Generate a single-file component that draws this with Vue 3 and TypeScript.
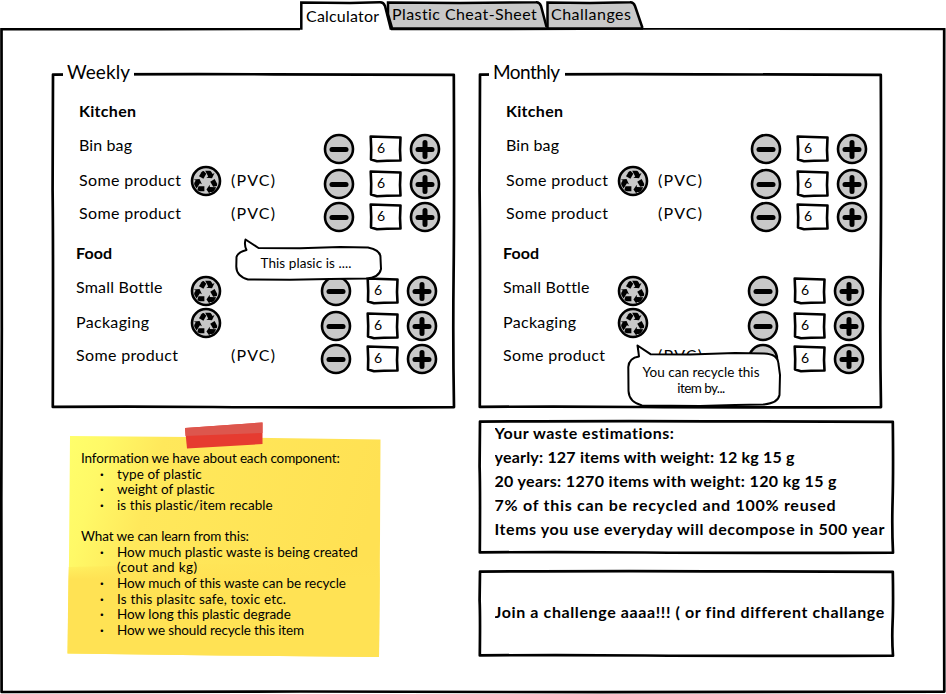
<script setup lang="ts">
import type { Directive } from 'vue'

interface Row { name: string; width: number; recycle?: boolean; pvc?: boolean; qty: number }
interface Group { title: string; width: number; rows: Row[]; kind: string }
interface Line { text: string; width: number; kind?: 'item' | 'cont' | 'gap' }

/* Spreads the letters of a line so that it takes the given width. */
const vFit: Directive<HTMLElement, number> = {
  mounted(el, { value }) {
    const count = (el.textContent ?? '').trim().length
    const natural = el.getBoundingClientRect().width
    if (count > 1) el.style.letterSpacing = `${(value - natural) / (count - 1)}px`
  },
}

const groups: Group[] = [
  {
    title: 'Kitchen', width: 57, kind: 'kitchen',
    rows: [
      { name: 'Bin bag', width: 53, qty: 6 },
      { name: 'Some product', width: 102, recycle: true, pvc: true, qty: 6 },
      { name: 'Some product', width: 102, pvc: true, qty: 6 },
    ],
  },
  {
    title: 'Food', width: 36, kind: 'food',
    rows: [
      { name: 'Small Bottle', width: 86, recycle: true, qty: 6 },
      { name: 'Packaging', width: 73, recycle: true, qty: 6 },
      { name: 'Some product', width: 102, pvc: true, qty: 6 },
    ],
  },
]

const panels = [
  { title: 'Weekly', width: 63, kind: 'weekly' },
  { title: 'Monthly', width: 67, kind: 'monthly' },
]

const notes: Line[] = [
  { text: 'Information we have about each component:', width: 259 },
  { text: 'type of plastic', width: 85, kind: 'item' },
  { text: 'weight of plastic', width: 98, kind: 'item' },
  { text: 'is this plastic/item recable', width: 156, kind: 'item' },
  { text: '', width: 0, kind: 'gap' },
  { text: 'What we can learn from this:', width: 168 },
  { text: 'How much plastic waste is being created', width: 241, kind: 'item' },
  { text: '(cout and kg)', width: 80, kind: 'cont' },
  { text: 'How much of this waste can be recycle', width: 229, kind: 'item' },
  { text: 'Is this plasitc safe, toxic etc.', width: 169, kind: 'item' },
  { text: 'How long this plastic degrade', width: 174, kind: 'item' },
  { text: 'How we should recycle this item', width: 187, kind: 'item' },
]

const estimates: Line[] = [
  { text: 'Your waste estimations:', width: 180 },
  { text: 'yearly: 127 items with weight: 12 kg 15 g', width: 300 },
  { text: '20 years: 1270 items with weight: 120 kg 15 g', width: 342 },
  { text: '7% of this can be recycled and 100% reused', width: 341 },
  { text: 'Items you use everyday will decompose in 500 year', width: 390 },
]

/* A closed, slightly uneven rectangle drawn inside a w × h box. */
const frame = (w: number, h: number): string =>
  `M2 2.6 Q${w * 0.3} 1.9 ${w * 0.55} 2.3 T${w - 2.2} 2.8 Q${w - 1.6} ${h * 0.4} ${w - 2.4} ${h * 0.6} T${w - 2} ${h - 2.4} Q${w * 0.6} ${h - 1.8} ${w * 0.4} ${h - 2.5} T1.8 ${h - 2.6} Q2.3 ${h * 0.5} 1.6 ${h * 0.35} Z`
</script>

<template>
  <div class="page">
    <nav class="tabs">
      <svg class="tabs-art" width="350" height="32" viewBox="0 0 350 32">
        <path class="tab-off" d="M247.500 28V2.600L290 3L330 2.300Q333.500 2 335 6L342.500 28" />
        <path class="tab-off" d="M92 28L88 14V2.600L160 3L236 2.300Q239.500 2 241 6L246.500 27" />
        <path class="tab-on" d="M1.300 29.700V2.500L50 3L80 2.300Q83.500 2.200 85 6L91 29.700" />
        <path class="tab-base" d="M91 28.500H343" />
      </svg>
      <span class="tab first"><span v-fit="73">Calculator</span></span>
      <span class="tab second"><span v-fit="145">Plastic Cheat-Sheet</span></span>
      <span class="tab third"><span v-fit="80">Challanges</span></span>
    </nav>

    <main class="board">
      <svg class="frame" width="946" height="666" viewBox="0 0 946 666">
        <path d="M300 .8L160 1.200L1.500 .8L1.800 300L1.300 470L1.600 664L300 663.500L600 664.200L944.300 663.600L943.600 330L944.200 .8L660 .5L391 1" />
      </svg>

      <section v-for="p in panels" :key="p.title" class="panel" :class="p.kind">
        <svg class="frame" width="406" height="338" viewBox="0 0 406 338"><path :d="frame(405, 337.500)" /></svg>
        <h2 class="legend"><span v-fit="p.width">{{ p.title }}</span></h2>
        <div v-for="g in groups" :key="g.title" class="group" :class="g.kind">
          <h3><span v-fit="g.width">{{ g.title }}</span></h3>
          <div v-for="(r, i) in g.rows" :key="i" class="row">
            <span class="name"><span v-fit="r.width">{{ r.name }}</span></span>
            <span class="badge">
              <svg v-if="r.recycle" width="32" height="32" viewBox="-16 -16 32 32">
                <circle class="disc" r="14" />
                <g v-for="a in [0, 120, 240]" :key="a" :transform="`translate(0 1.200) rotate(${a})`">
                  <path d="M-7 -5.900L-4.600 -9.900Q-3.800 -11.200 -2.200 -11.200L.3 -8.500L-2.600 -3.400Z" />
                  <path d="M-.8 -11.400H3.400Q4.700 -11.300 5.400 -10.200L6.600 -8.100L8.500 -9.100L6 -4L.3 -4.500L2.200 -5.700Z" />
                </g>
              </svg>
            </span>
            <span class="pvc"><span v-if="r.pvc" v-fit="44">(PVC)</span></span>
            <svg width="32" height="32" viewBox="-16 -16 32 32">
              <circle class="disc" r="14" /><path class="sign" d="M-7 0.500H7" />
            </svg>
            <span class="qty">
              <svg width="33" height="28" viewBox="0 0 33 28">
                <path d="M1.700 1.500L16 2L31.500 2.500L31 15L31.500 25.500L18 25.700L8 26.200L2 24.500L2.200 14Z" />
              </svg>
              <span>{{ r.qty }}</span>
            </span>
            <svg width="32" height="32" viewBox="-16 -16 32 32">
              <circle class="disc" r="14" /><path class="sign" d="M-7 0.500H7M0 -6.500V7.500" />
            </svg>
          </div>
        </div>

        <div v-if="p.kind === 'weekly'" class="bubble plasic">
          <svg width="150" height="46" viewBox="234 236 150 46">
            <path d="M246.500 250Q244 245 245.500 239.500L258.500 248L300 248.200L340 247L368 247.500Q381 250 380.500 258L381 269Q379 278 366 278.500L330 279L290 279.800L248 279.500Q236 276 236.300 266L236.500 257Q238 252 246.500 250Z" />
          </svg>
          <p><span v-fit="91">This plasic is ....</span></p>
        </div>
        <div v-else class="bubble recycle">
          <svg width="156" height="66" viewBox="626 342 156 66">
            <path d="M639 356.500Q638.500 352 637.500 345.500L650.500 354.200L690 354.500L735 353L764 353.500Q778 354 778.500 364L780 375L779.500 395Q778 403 764 404.500L735 405L700 406L642 405.500Q629 402 628.500 391L628.300 367Q629 358 639 356.500Z" />
          </svg>
          <p><span v-fit="117">You can recycle this</span><br><span v-fit="48">item by...</span></p>
        </div>
      </section>

      <section class="note">
        <svg width="320" height="240" viewBox="65 420 320 240">
          <defs>
            <linearGradient id="paper" x1="0" y1="0" x2="1" y2=".2">
              <stop offset="0" stop-color="#ffff6b" />
              <stop offset=".12" stop-color="#fff967" />
              <stop offset=".3" stop-color="#ffe85b" />
              <stop offset="1" stop-color="#ffe153" />
            </linearGradient>
            <linearGradient id="fold" x1="0" y1="0" x2="0" y2="1">
              <stop offset="0" stop-color="#ffe254" stop-opacity="0" />
              <stop offset=".2" stop-color="#ffe254" />
            </linearGradient>
          </defs>
          <path fill="url(#paper)" d="M70 436L190 437L380.500 439.500L380 540L379 657L220 655.500L67.500 653.500L69 560Z" />
          <path fill="url(#fold)" d="M68.500 567L380 560L379 657L220 655.500L67.500 653.500Z" />
          <path fill="#e63b30" d="M185 428L262.500 422.500V444L187 448.500Z" />
          <path fill="#dd564d" d="M185 428L262.500 422.500V433L185.500 436Z" />
        </svg>
        <div class="note-text">
          <div v-for="(n, i) in notes" :key="i" class="line" :class="n.kind">
            <span v-if="n.kind !== 'gap'" v-fit="n.width">{{ n.text }}</span>
          </div>
        </div>
      </section>

      <div class="results">
        <section class="estimates">
          <svg class="frame" width="418" height="136" viewBox="0 0 418 136"><path :d="frame(417, 136)" /></svg>
          <div class="clip">
            <p v-for="e in estimates" :key="e.text"><span v-fit="e.width">{{ e.text }}</span></p>
          </div>
        </section>
        <section class="challenge">
          <svg class="frame" width="418" height="89" viewBox="0 0 418 89"><path :d="frame(417, 89)" /></svg>
          <div class="clip"><p><span v-fit="389">Join a challenge aaaa!!! ( or find different challange</span></p></div>
        </section>
      </div>
    </main>
  </div>
</template>

<style>
body { background: #fff; overflow: hidden; }
</style>

<style scoped>
.page { width: 946px; height: 694px; overflow: hidden; color: #000; background: #fff; font-family: Lato, "Open Sans", sans-serif; font-size: 16px; white-space: nowrap; }
h2, h3, p { margin: 0; }
svg { display: block; }
.tabs { position: relative; z-index: 1; display: flex; height: 28px; padding-left: 300px; }
.tabs-art { position: absolute; left: 300px; top: 0; }
.tabs-art path { stroke: #000; stroke-width: 2.5; }
.tab-off { fill: #c8c8c8; }
.tab-on { fill: #fff; }
.tab { position: relative; line-height: 28px; }
.tab.first { width: 86px; padding-left: 6px; line-height: 32px; }
.tab.second { width: 159px; }
.board { position: relative; display: grid; grid-template-columns: 427px 427px; grid-template-rows: 338px 1fr; box-sizing: border-box; height: 666px; padding: 44px 0 0 51px; }
.frame { position: absolute; left: 0; top: 0; }
.frame path { fill: none; stroke: #000; stroke-width: 2.7; stroke-linejoin: round; }
.panel { position: relative; width: 406px; height: 338px; }
.legend { position: relative; width: 67px; margin-left: 12px; padding-left: 4px; height: 24px; margin-top: -12px; line-height: 24px; background: #fff; font-size: 19px; font-weight: 400; }
.monthly .legend { width: 72px; margin-left: 11px; }
.group { position: relative; margin-left: 28px; height: 142px; --name: 111px; --pvc: 92px; }
.kitchen { padding-top: 16px; height: 126px; }
.food { margin-left: 25px; padding-top: 16px; --name: 114px; --pvc: 89px; }
.group h3 { height: 32px; line-height: 22px; font-size: 16px; font-weight: 700; }
.row { display: grid; grid-template-columns: var(--name) 41px var(--pvc) 46px 40px 32px; grid-template-rows: 100%; align-items: center; height: 34px; }
.row:nth-child(3) { height: 36px; }
.row:nth-child(4) { height: 32px; margin-top: -1px; }
.name, .pvc { padding-bottom: 8px; line-height: 20px; }
.badge { height: 32px; }
.row:nth-child(3) .badge { margin-bottom: 6px; }
.disc { fill: #c8c8c8; stroke: #000; stroke-width: 2.6; }
.sign { fill: none; stroke: #000; stroke-width: 5; stroke-linecap: round; }
.qty { display: grid; font-size: 14px; line-height: 20px; }
.qty > * { grid-area: 1 / 1; }
.qty path { fill: #fff; stroke: #000; stroke-width: 2.6; stroke-linejoin: round; }
.qty span { padding: 3px 0 0 8px; }
.bubble { position: absolute; z-index: 2; font-size: 13.5px; text-align: center; }
.bubble path { fill: #fff; stroke: #000; stroke-width: 2; stroke-linejoin: round; }
.bubble p { position: absolute; left: 0; right: 0; line-height: 16px; }
.plasic { left: 183px; top: 164px; }
.plasic p { top: 19px; padding-right: 6px; }
.recycle { left: 148px; top: 270px; }
.recycle p { top: 22px; padding-right: 6px; }
.results { grid-column: 2; grid-row: 2; padding-top: 9px; }
.note { grid-column: 1; grid-row: 2; display: grid; align-content: start; padding: 10px 0 0 14px; }
.note > * { grid-area: 1 / 1; }
.note-text { position: relative; padding: 30px 0 0 16px; font-size: 13.5px; }
.line { height: 15.65px; line-height: 16px; }
.item, .cont { padding-left: 36px; }
.item { display: flex; padding-left: 19px; }
.item::before { content: "·"; width: 17px; font-weight: 700; }
.estimates, .challenge { position: relative; width: 418px; box-sizing: border-box; font-weight: 700; }
.estimates { height: 136px; padding-top: 2px; }
.challenge { height: 89px; margin-top: 14px; padding-top: 31px; }
.clip { margin-left: 16.5px; width: 390px; overflow: hidden; }
.clip p { height: 24px; line-height: 24px; }
</style>
